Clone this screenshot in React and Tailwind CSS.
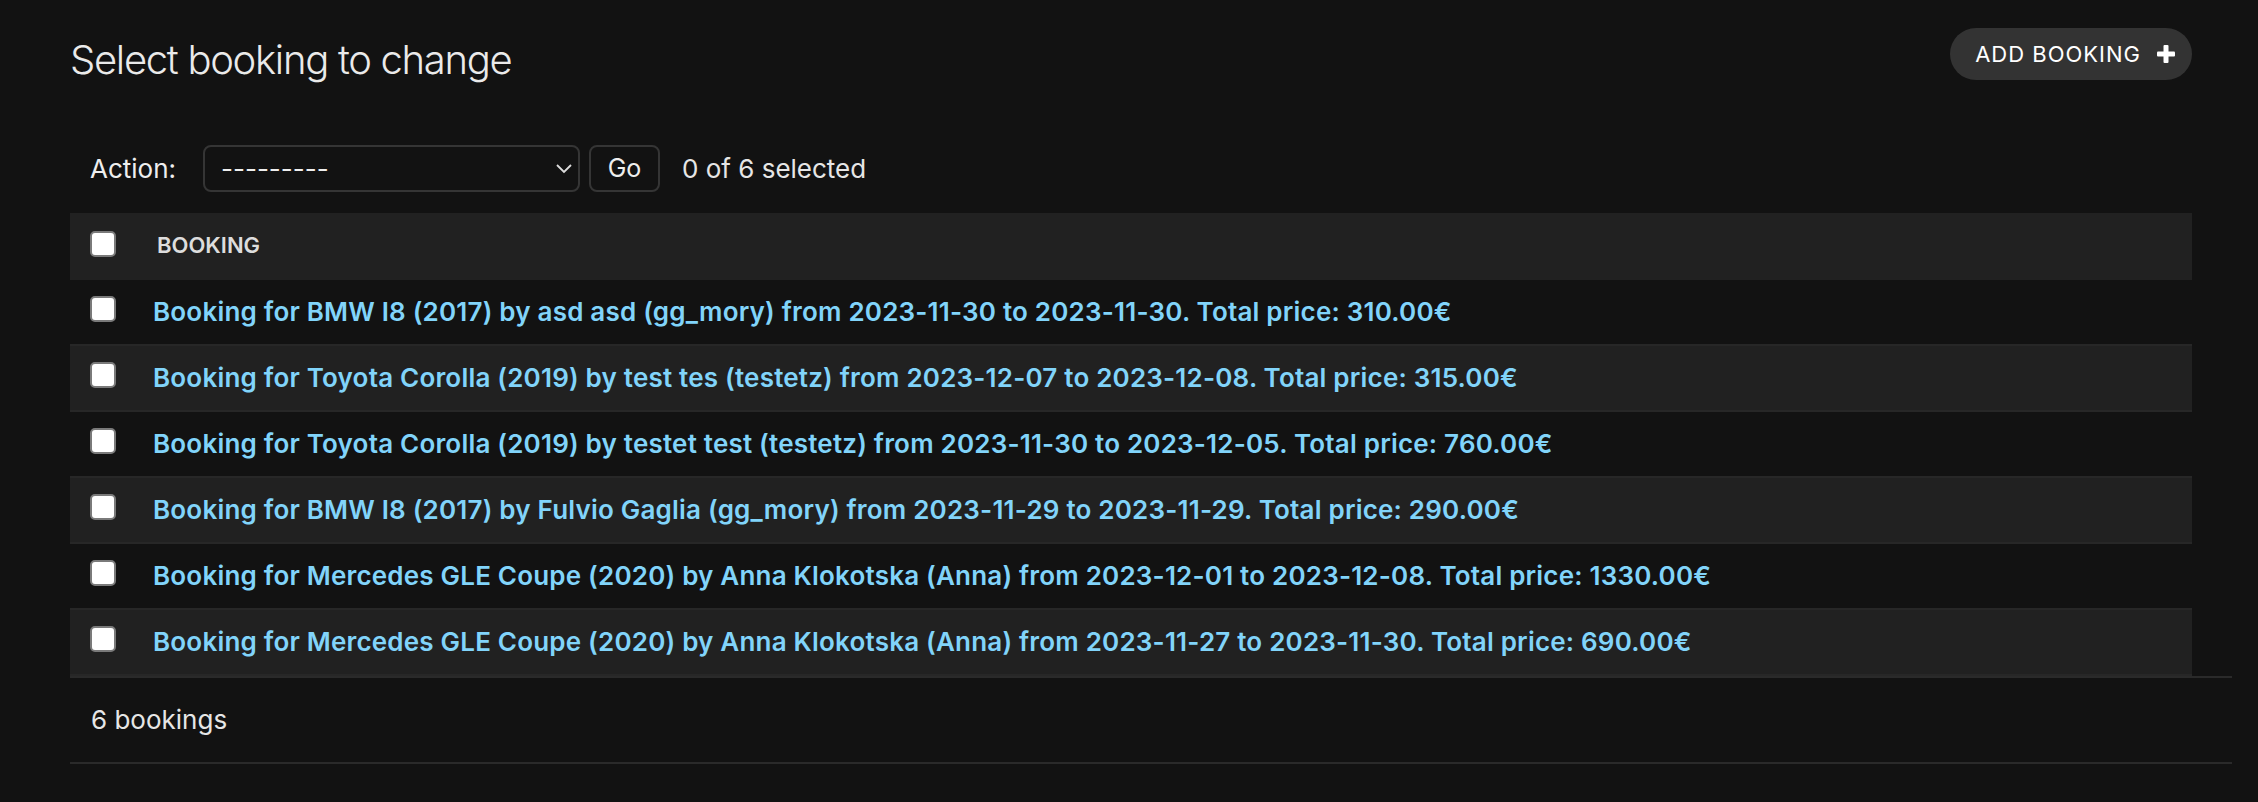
import React from 'react';

const bookings = [
  'Booking for BMW I8 (2017) by asd asd (gg_mory) from 2023-11-30 to 2023-11-30. Total price: 310.00€',
  'Booking for Toyota Corolla (2019) by test tes (testetz) from 2023-12-07 to 2023-12-08. Total price: 315.00€',
  'Booking for Toyota Corolla (2019) by testet test (testetz) from 2023-11-30 to 2023-12-05. Total price: 760.00€',
  'Booking for BMW I8 (2017) by Fulvio Gaglia (gg_mory) from 2023-11-29 to 2023-11-29. Total price: 290.00€',
  'Booking for Mercedes GLE Coupe (2020) by Anna Klokotska (Anna) from 2023-12-01 to 2023-12-08. Total price: 1330.00€',
  'Booking for Mercedes GLE Coupe (2020) by Anna Klokotska (Anna) from 2023-11-27 to 2023-11-30. Total price: 690.00€',
];

const Checkbox = () => (
  <span className="block w-[26px] h-[26px] shrink-0 bg-white border-2 border-[#7a7a7a] rounded-[5px]" />
);

const PlusIcon = () => (
  <svg width="18" height="18" viewBox="0 0 18 18" className="ml-4">
    <rect x="6.5" y="0" width="5" height="18" rx="1" fill="#fff" />
    <rect x="0" y="6.5" width="18" height="5" rx="1" fill="#fff" />
  </svg>
);

const App = () => {
  return (
    <div className="min-h-screen bg-[#121212] text-[#eeeeee] font-['Inter','Liberation_Sans',sans-serif]">
      <div className="pl-[70px] pr-[26px]">
        <div className="flex items-start justify-between pr-[40px]">
          <h1 className="mt-[36px] text-[40px] leading-[48px] font-light tracking-[-1.3px] text-[#eaeaea]">
            Select booking to change
          </h1>
          <a className="mt-[28px] h-[52px] flex items-center pl-[25px] pr-[17px] rounded-full bg-[#333333] text-white text-[22px] tracking-[1px] uppercase">
            Add booking
            <PlusIcon />
          </a>
        </div>

        <div className="mt-[61px] h-[47px] flex items-center pl-[20px] text-[26px]">
          <span className="w-[113px] shrink-0">Action:</span>
          <div className="relative w-[377px] h-[47px] border-2 border-[#353535] rounded-[8px] flex items-center pl-[16px]">
            <span className="leading-none">---------</span>
            <svg width="16" height="10" viewBox="0 0 16 10" className="absolute right-[6px] top-[17px]">
              <polyline points="1,1 8,8 15,1" fill="none" stroke="#dddddd" strokeWidth="1.8" />
            </svg>
          </div>
          <button className="ml-[9px] w-[71px] h-[47px] border-2 border-[#353535] rounded-[8px] text-[25px] text-[#eeeeee]">
            Go
          </button>
          <span className="ml-[22px] text-[#e6e6e6]">0 of 6 selected</span>
        </div>

        <div className="mt-[21px] mr-[40px]">
          <div className="h-[67px] bg-[#212121] flex items-start pt-[18px] pl-[20px]">
            <Checkbox />
            <span className="ml-[41px] mt-[1px] text-[22px] leading-[26px] font-semibold uppercase text-[#dddddd]">
              Booking
            </span>
          </div>
          {bookings.map((b, i) => (
            <div
              key={i}
              className={`flex items-start pt-[16px] pb-[16px] pl-[20px] border-b-2 border-[#272727] ${
                i % 2 === 1 ? 'bg-[#212121]' : 'bg-[#121212]'
              }`}
            >
              <Checkbox />
              <a className="ml-[37px] text-[26px] leading-[32px] font-semibold tracking-[0.2px] text-[#81d4fa]">{b}</a>
            </div>
          ))}
        </div>

        <div className="border-t-2 border-b-2 border-[#2a2a2a] py-[26px] pl-[21px] text-[26px] leading-[32px] text-[#e6e6e6]">
          6 bookings
        </div>
      </div>
    </div>
  );
};

export default App;
